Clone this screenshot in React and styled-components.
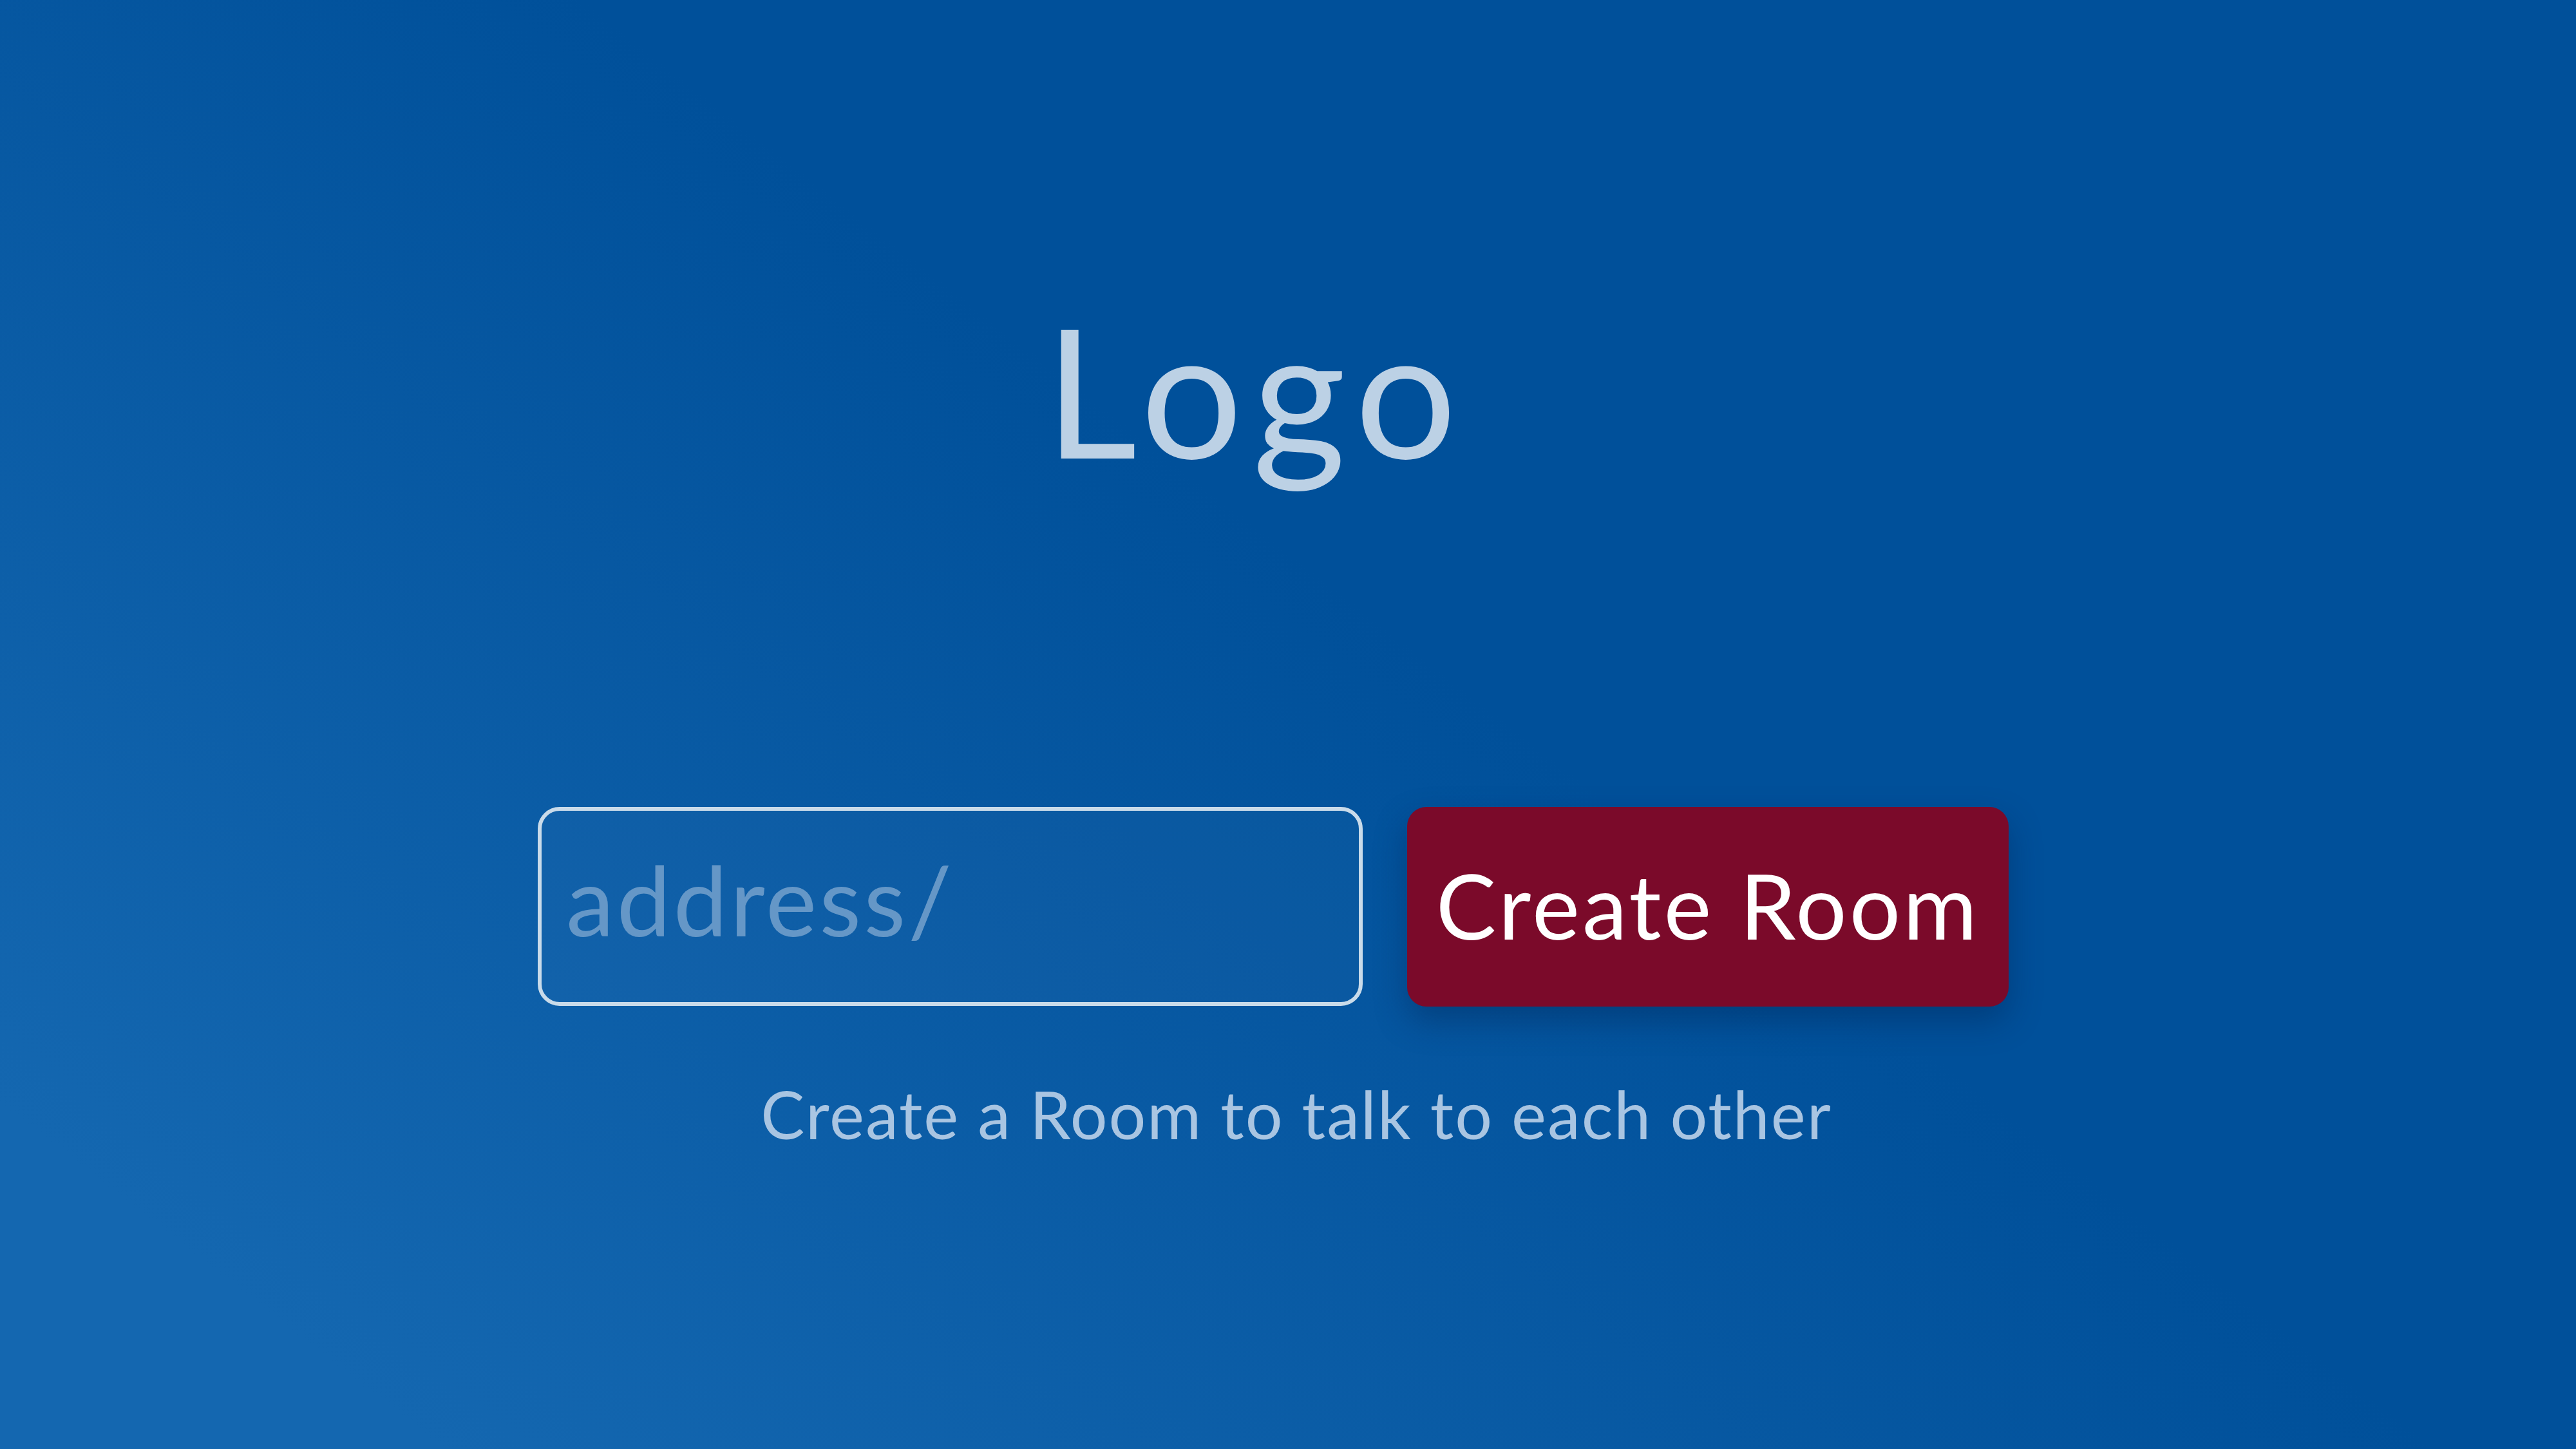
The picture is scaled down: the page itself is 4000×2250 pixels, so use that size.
import React from 'react';
import styled, { createGlobalStyle } from 'styled-components';

const GlobalStyle = createGlobalStyle`
  html, body {
    margin: 0;
    padding: 0;
  }
  body {
    font-family: Lato, "Open Sans", sans-serif;
  }
`;

const Page = styled.main`
  width: 100vw;
  height: 100vh;
  display: flex;
  flex-direction: column;
  align-items: center;
  background: linear-gradient(38deg, #1467b0 10%, #00509a 55%);
  overflow: hidden;
`;

const Logo = styled.h1`
  margin: 465px 100px 0 0;
  font-size: 279px;
  line-height: 1;
  font-weight: 400;
  letter-spacing: 16px;
  color: #bcd1e5;
`;

const Form = styled.form`
  display: flex;
  gap: 69px;
  margin: 0 46px 0 0;
  margin-top: ${props => props.offset}px;
`;

const AddressInput = styled.input`
  box-sizing: border-box;
  width: 1281px;
  height: 309px;
  padding: 0 0 24px 38px;
  border: 6px solid #c9dbea;
  border-radius: 34px;
  background: rgba(255, 255, 255, 0.025);
  font-family: inherit;
  font-size: 150px;
  letter-spacing: 4px;
  color: #dbe8f4;
  outline: none;

  &::placeholder {
    color: #6597c7;
  }
`;

const CreateButton = styled.button`
  box-sizing: border-box;
  width: 934px;
  height: 310px;
  padding: 0 0 6px;
  border: none;
  border-radius: 30px;
  background: #7b0a2a;
  color: #ffffff;
  font-family: inherit;
  font-size: 140px;
  letter-spacing: 4px;
  box-shadow: 0 22px 50px rgba(0, 30, 70, 0.35);
  cursor: pointer;
`;

const Tagline = styled.p`
  margin: 116px 0 0 26px;
  font-size: 102px;
  line-height: 1;
  letter-spacing: 2px;
  color: #a9c5e2;
`;

const App = () => (
  <Page>
    <GlobalStyle />
    <Logo>Logo</Logo>
    <Form offset={509} onSubmit={e => e.preventDefault()}>
      <AddressInput type="text" placeholder="address/" />
      <CreateButton type="submit">Create Room</CreateButton>
    </Form>
    <Tagline>Create a Room to talk to each other</Tagline>
  </Page>
);

export default App;
